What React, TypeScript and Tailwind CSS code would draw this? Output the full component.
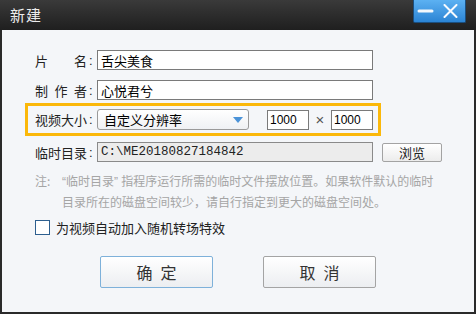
import React from 'react';

const cjk = "font-['Noto_Sans_CJK_SC','Noto_Sans',sans-serif]";

const Label = ({ text }: { text: string }) => (
  <div className="w-[62px] shrink-0 flex items-center text-[13px] leading-none text-[#222]">
    <div className="w-[52px] flex justify-between">
      {text.split('').map((ch, i) => (
        <span key={i}>{ch}</span>
      ))}
    </div>
    <span className="ml-[2px] font-['Liberation_Sans',sans-serif]">:</span>
  </div>
);

const TextBox = ({ value }: { value: string }) => (
  <div className="w-[276px] h-[20px] border border-[#7a7a7a] bg-white flex items-center pl-[3px] text-[13px] leading-none text-black">
    {value}
  </div>
);

const App = () => {
  return (
    <div className={`w-[476px] h-[314px] flex flex-col bg-[#2a2a2a] ${cjk}`}>
      {/* title bar */}
      <div className="h-[30px] shrink-0 flex items-start justify-between bg-gradient-to-b from-[#3a3a3a] to-[#1f1f1f]">
        <div className="pl-[10px] pt-[6px] text-[15px] leading-[18px] text-[#ececec] tracking-[1px]">新建</div>
        <div className="mr-[10px] w-[53px] h-[23px] rounded-b-[2px] border border-[#1b4f80] border-t-0 bg-gradient-to-b from-[#5cb1f2] to-[#2b84d4] flex items-center justify-between pl-[3px] pr-[7px]">
          <svg width="17" height="10" viewBox="0 0 17 10">
            <rect x="0.5" y="3.5" width="16" height="3" rx="1.5" fill="#f4f8fc" />
          </svg>
          <svg width="15" height="14" viewBox="0 0 15 14">
            <path d="M1.5 1 L13.5 13 M13.5 1 L1.5 13" stroke="#f8fbff" strokeWidth="2" strokeLinecap="round" />
          </svg>
        </div>
      </div>

      {/* body */}
      <div className="flex-1 mx-[2px] mb-[2px] bg-[#f4f6f9] flex flex-col pl-[23px] pt-[20px]">
        <div className="flex items-center h-[20px] ml-[10px]">
          <Label text="片名" />
          <TextBox value="舌尖美食" />
        </div>
        <div className="flex items-center h-[20px] ml-[10px] mt-[10px]">
          <Label text="制作者" />
          <TextBox value="心悦君兮" />
        </div>

        <div className="mt-[3px] w-[356px] h-[33px] border-[3px] border-[#fbb80a] flex items-center pl-[7px]">
          <Label text="视频大小" />
          <div className="w-[152px] h-[21px] rounded-[3px] border border-[#9a9a9a] bg-gradient-to-b from-white to-[#eff1f4] flex items-center justify-between pl-[6px] pr-[5px] text-[13px] leading-none text-black">
            <span>自定义分辨率</span>
            <svg width="10" height="6" viewBox="0 0 10 6">
              <path d="M0 0 H10 L5 6 Z" fill="#4b93d8" />
            </svg>
          </div>
          <div className="ml-[18px] w-[42px] h-[20px] border border-[#7a7a7a] bg-white flex items-center pl-[2px] text-[12px] leading-none text-black font-['Liberation_Sans',sans-serif]">1000</div>
          <div className="w-[22px] text-center text-[15px] leading-none text-[#555] font-['Liberation_Sans',sans-serif]">×</div>
          <div className="w-[42px] h-[20px] border border-[#7a7a7a] bg-white flex items-center pl-[2px] text-[12px] leading-none text-black font-['Liberation_Sans',sans-serif]">1000</div>
        </div>

        <div className="flex items-center h-[20px] ml-[10px] mt-[6px]">
          <Label text="临时目录" />
          <div className="w-[276px] h-[20px] border border-[#8a8a8a] bg-[#ececec] flex items-center pl-[3px] text-[12.5px] leading-none text-[#222] font-['Liberation_Mono',monospace]">
            C:\ME20180827184842
          </div>
          <div className="ml-[9px] w-[60px] h-[19px] rounded-[2px] border border-[#a3a3a3] bg-gradient-to-b from-white to-[#ececec] flex items-center justify-center text-[13px] leading-none text-[#222]">
            浏览
          </div>
        </div>

        <div className="flex ml-[10px] mt-[9px] text-[12px] leading-[20px] text-[#a5a5a5]">
          <div className="w-[27px] shrink-0">注:</div>
          <div>
            <span className="font-['Liberation_Sans',sans-serif]">“</span>临时目录<span className="font-['Liberation_Sans',sans-serif]">” </span>指程序运行所需的临时文件摆放位置。如果软件默认的临时
            <br />
            目录所在的磁盘空间较少，请自行指定到更大的磁盘空间处。
          </div>
        </div>

        <div className="flex items-center ml-[10px] mt-[8px]">
          <div className="w-[15px] h-[15px] border border-[#2d5f8f] bg-white" />
          <div className="ml-[6px] text-[13px] leading-none text-[#222]">为视频自动加入随机转场特效</div>
        </div>

        <div className="flex ml-[75px] mt-[21px]">
          <div className="w-[113px] h-[32px] rounded-[2px] border border-[#7eb1da] bg-gradient-to-b from-white to-[#eceef1] flex items-center justify-center text-[16px] leading-none text-[#333] tracking-[8px] pl-[8px]">
            确定
          </div>
          <div className="ml-[50px] w-[113px] h-[32px] rounded-[2px] border border-[#a4a4a4] bg-gradient-to-b from-white to-[#eceef1] flex items-center justify-center text-[16px] leading-none text-[#333] tracking-[8px] pl-[8px]">
            取消
          </div>
        </div>
      </div>
    </div>
  );
};

export default App;
